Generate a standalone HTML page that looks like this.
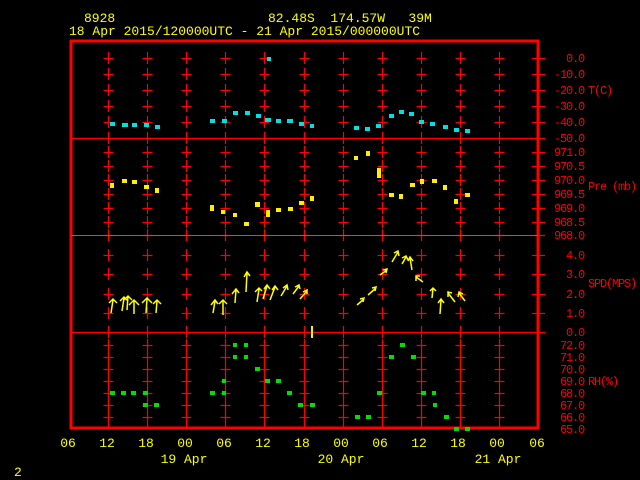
<!DOCTYPE html>
<html><head><style>
html,body{margin:0;padding:0;background:#000;width:640px;height:480px;overflow:hidden}
svg{display:block}
text{font-family:"Liberation Mono",monospace;font-size:13px}
.y{fill:#ffff00}.r{fill:#ff0000}
g.s text{font-size:12px;letter-spacing:-1.2px}
</style></head><body>
<svg width="640" height="480" viewBox="0 0 640 480" xmlns="http://www.w3.org/2000/svg">
<text class="y" x="84" y="22">8928</text>
<text class="y" x="268" y="22" xml:space="preserve">82.48S  174.57W   39M</text>
<text class="y" x="69" y="35">18 Apr 2015/120000UTC - 21 Apr 2015/000000UTC</text>

<g id="grid" stroke="#ff0000" stroke-width="1.2">
</g>
<script>
(function(){
var g=document.getElementById('grid');var NS='http://www.w3.org/2000/svg';
var xs=[];for(var k=0;k<11;k++)xs.push(Math.round(108+39.1*k)+0.5);
var ys=[58,74,90,106,122,138,152,166,180,194,208,222,235,255,274,294,313,332,345,357,369,381,393,405,417];
function L(x1,y1,x2,y2,c){var l=document.createElementNS(NS,'line');l.setAttribute('x1',x1);l.setAttribute('y1',y1);l.setAttribute('x2',x2);l.setAttribute('y2',y2);if(c)l.setAttribute('stroke',c);g.appendChild(l);}
xs.forEach(function(x){ys.forEach(function(y){L(x,y-6,x,y+6);L(x-5,y+0.5,x+5,y+0.5);});L(x,423,x,428);});
[58,74,90,106,122,138,152,166,180,194,208,222,235,255,274,294,313,332].forEach(function(y){L(532,y+0.5,545,y+0.5);});
})();
</script>
<!-- frame -->
<rect x="71" y="41" width="467" height="387" fill="none" stroke="#ff0000" stroke-width="3"/>
<line x1="71" y1="138.5" x2="538" y2="138.5" stroke="#ff0000" stroke-width="1.2"/>
<line x1="71" y1="235.5" x2="538" y2="235.5" stroke="#707070" stroke-width="1"/>
<line x1="71" y1="332.5" x2="538" y2="332.5" stroke="#ff0000" stroke-width="1.2"/>
<!-- right labels -->
<g class="r s" text-anchor="end">
<text x="584" y="62">0.0</text><text x="584" y="78">-10.0</text><text x="584" y="94">-20.0</text><text x="584" y="110">-30.0</text><text x="584" y="126">-40.0</text><text x="584" y="142">-50.0</text>
<text x="584" y="156">971.0</text><text x="584" y="170">970.5</text><text x="584" y="184">970.0</text><text x="584" y="198">969.5</text><text x="584" y="212">969.0</text><text x="584" y="226">968.5</text><text x="584" y="239">968.0</text>
<text x="584" y="259">4.0</text><text x="584" y="278">3.0</text><text x="584" y="298">2.0</text><text x="584" y="317">1.0</text><text x="584" y="336">0.0</text>
<text x="584" y="349">72.0</text><text x="584" y="361">71.0</text><text x="584" y="373">70.0</text><text x="584" y="385">69.0</text><text x="584" y="397">68.0</text><text x="584" y="409">67.0</text><text x="584" y="421">66.0</text><text x="584" y="433">65.0</text>
</g>
<g class="r s">
<text x="588" y="94">T(C)</text><text x="588" y="190">Pre (mb)</text><text x="588" y="287">SPD(MPS)</text><text x="588" y="385">RH(%)</text>
</g>
<!-- bottom labels -->
<g class="y" text-anchor="middle">
<text x="68" y="447">06</text><text x="107" y="447">12</text><text x="146" y="447">18</text><text x="185" y="447">00</text><text x="224" y="447">06</text><text x="263" y="447">12</text><text x="302" y="447">18</text><text x="341" y="447">00</text><text x="380" y="447">06</text><text x="419" y="447">12</text><text x="458" y="447">18</text><text x="497" y="447">00</text><text x="537" y="447">06</text>
<text x="184" y="463">19 Apr</text><text x="341" y="463">20 Apr</text><text x="498" y="463">21 Apr</text>
</g>
<text class="y" x="14" y="476">2</text>
<!-- temperature -->
<g fill="#00e0e0">
<rect x="110" y="122" width="5" height="4"/><rect x="122" y="123" width="6" height="4"/><rect x="132" y="123" width="5" height="4"/><rect x="144" y="123" width="5" height="4"/><rect x="155" y="125" width="5" height="4"/>
<rect x="210" y="119" width="5" height="4"/><rect x="222" y="119" width="5" height="4"/><rect x="233" y="111" width="5" height="4"/><rect x="245" y="111" width="5" height="4"/><rect x="256" y="114" width="5" height="4"/><rect x="265" y="118" width="6" height="4"/><rect x="276" y="119" width="5" height="4"/><rect x="287" y="119" width="6" height="4"/><rect x="299" y="122" width="5" height="4"/><rect x="310" y="124" width="4" height="4"/><rect x="267" y="57" width="4" height="4"/>
<rect x="354" y="126" width="5" height="4"/><rect x="365" y="127" width="5" height="4"/><rect x="376" y="124" width="5" height="4"/><rect x="389" y="114" width="5" height="4"/><rect x="399" y="110" width="5" height="4"/><rect x="409" y="112" width="5" height="4"/><rect x="419" y="120" width="5" height="4"/><rect x="430" y="122" width="5" height="4"/><rect x="443" y="125" width="5" height="4"/><rect x="454" y="128" width="5" height="4"/><rect x="465" y="129" width="5" height="4"/>
</g>
<!-- pressure -->
<g fill="#ffee00">
<rect x="110" y="183" width="4" height="5"/><rect x="122" y="179" width="5" height="4"/><rect x="132" y="180" width="5" height="4"/><rect x="144" y="185" width="5" height="4"/><rect x="155" y="188" width="4" height="5"/>
<rect x="210" y="205" width="4" height="6"/><rect x="221" y="210" width="4" height="4"/><rect x="233" y="213" width="4" height="4"/><rect x="244" y="222" width="5" height="4"/><rect x="255" y="202" width="5" height="5"/><rect x="266" y="210" width="4" height="7"/><rect x="276" y="208" width="5" height="4"/><rect x="288" y="207" width="5" height="4"/><rect x="299" y="201" width="5" height="4"/><rect x="310" y="196" width="4" height="5"/>
<rect x="354" y="156" width="4" height="4"/><rect x="366" y="151" width="4" height="5"/><rect x="377" y="168" width="4" height="10"/><rect x="389" y="193" width="5" height="4"/><rect x="399" y="194" width="4" height="5"/><rect x="410" y="183" width="5" height="4"/><rect x="420" y="179" width="4" height="5"/><rect x="432" y="179" width="5" height="4"/><rect x="443" y="185" width="4" height="5"/><rect x="454" y="199" width="4" height="5"/><rect x="465" y="193" width="5" height="4"/>
</g>
<!-- wind arrows -->
<g stroke="#ffff00" stroke-width="1.5" fill="none">
<path d="M111 313 L113 300 M109 303 L113 299 L117 303"/>
<path d="M122 311 L124 298 M120 301 L124 297 L128 301"/>
<path d="M127 310 L128 296 M124 300 L128 296 L132 300"/>
<path d="M134 314 L134 301 M129 305 L134 300 L139 305"/>
<path d="M146 313 L147 299 M142 303 L147 298 L152 303"/>
<path d="M156 313 L157 301 M153 304 L157 300 L161 304"/>
<path d="M213 313 L215 301 M211 305 L215 300 L218 304"/>
<path d="M223 315 L223 300 M219 304 L223 300 L227 304"/>
<path d="M235 303 L236 290 M232 294 L236 289 L239 293"/>
<path d="M246 292 L247 273 M244 277 L247 272 L250 276"/>
<path d="M257 302 L259 289 M255 292 L259 288 L262 291"/>
<path d="M263 299 L267 286 M264 289 L267 285 L270 289"/>
<path d="M270 300 L275 287 M272 290 L275 286 L278 290"/>
<path d="M281 296 L287 286 M283 288 L287 285 L288 290"/>
<path d="M293 294 L299 286 M295 287 L299 285 L300 289"/>
<path d="M300 299 L307 291 M303 292 L307 290 L307 294"/>
<path d="M357 305 L364 299 M360 299 L364 298 L363 302"/>
<path d="M368 295 L376 288 M372 288 L376 287 L375 291"/>
<path d="M380 275 L387 270 M383 270 L387 269 L386 273"/>
<path d="M392 262 L398 252 M394 253 L398 251 L399 256"/>
<path d="M402 264 L406 257 M402 258 L406 256 L408 260"/>
<path d="M412 270 L410 258 M408 261 L410 257 L413 261"/>
<path d="M423 282 L416 277 M416 281 L416 276 L420 276"/>
<path d="M432 298 L433 288 M430 291 L433 288 L436 291"/>
<path d="M440 314 L441 300 M438 303 L441 299 L444 303"/>
<path d="M455 302 L448 293 M448 297 L448 292 L452 293"/>
<path d="M465 301 L459 293 M458 297 L459 292 L463 294"/>
</g>
<rect x="311" y="326" width="2" height="12" fill="#ffee00"/>
<!-- RH -->
<g fill="#00e000">
<rect x="110" y="391" width="5" height="4"/><rect x="121" y="391" width="5" height="4"/><rect x="131" y="391" width="5" height="4"/><rect x="143" y="391" width="5" height="4"/><rect x="143" y="403" width="5" height="4"/><rect x="154" y="403" width="5" height="4"/>
<rect x="210" y="391" width="5" height="4"/><rect x="222" y="391" width="4" height="4"/><rect x="222" y="379" width="4" height="4"/><rect x="233" y="343" width="4" height="4"/><rect x="244" y="343" width="4" height="4"/><rect x="233" y="355" width="4" height="4"/><rect x="244" y="355" width="4" height="4"/><rect x="255" y="367" width="5" height="4"/><rect x="265" y="379" width="5" height="4"/><rect x="276" y="379" width="5" height="4"/><rect x="287" y="391" width="5" height="4"/><rect x="298" y="403" width="5" height="4"/><rect x="310" y="403" width="5" height="4"/>
<rect x="355" y="415" width="5" height="4"/><rect x="366" y="415" width="5" height="4"/><rect x="377" y="391" width="5" height="4"/><rect x="389" y="355" width="5" height="4"/><rect x="400" y="343" width="5" height="4"/><rect x="411" y="355" width="5" height="4"/><rect x="421" y="391" width="5" height="4"/><rect x="432" y="391" width="4" height="4"/><rect x="433" y="403" width="4" height="4"/><rect x="444" y="415" width="5" height="4"/><rect x="454" y="427" width="5" height="4"/><rect x="465" y="427" width="5" height="4"/>
</g>
</svg>
</body></html>
